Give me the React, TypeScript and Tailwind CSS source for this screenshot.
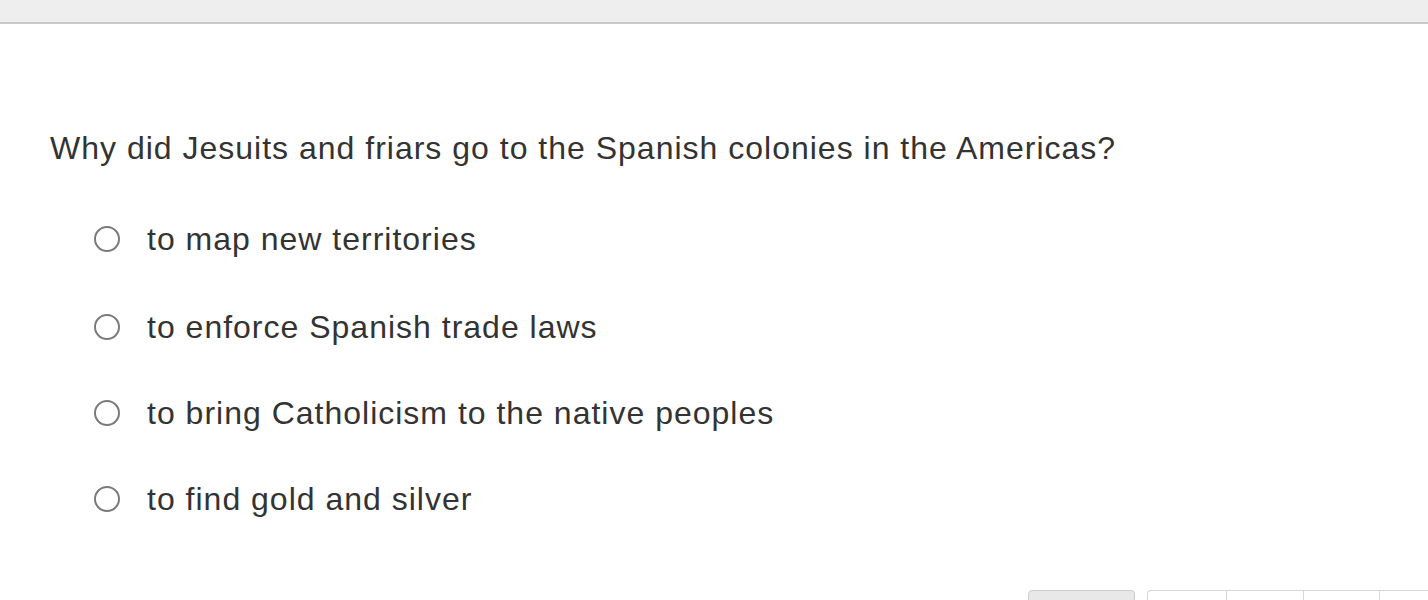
import React, { useState } from "react";

const options = [
  "to map new territories",
  "to enforce Spanish trade laws",
  "to bring Catholicism to the native peoples",
  "to find gold and silver",
];

const Radio: React.FC<{ checked: boolean }> = ({ checked }) => (
  <span className="flex h-[26px] w-[26px] shrink-0 items-center justify-center rounded-full border-2 border-[#7a7a7a] bg-white">
    {checked && <span className="h-[12px] w-[12px] rounded-full bg-[#555]" />}
  </span>
);

export default function App() {
  const [selected, setSelected] = useState<number | null>(null);

  return (
    <div
      className="h-[600px] w-full overflow-hidden bg-white text-[#333333]"
      style={{ fontFamily: '"Liberation Sans", Arial, Helvetica, sans-serif' }}
    >
      <div className="h-[24px] border-b-2 border-[#c8c8c8] bg-[#eeeeee]" />

      <div className="pl-[50px] pt-[106px]">
        <p className="text-[32px] leading-[36px] tracking-[1px]">
          Why did Jesuits and friars go to the Spanish colonies in the Americas?
        </p>
      </div>

      <ul className="mt-[28px] pl-[94px]">
        {options.map((opt, i) => (
          <li key={opt} className={i === 0 ? "h-[90px]" : "h-[86px]"}>
            <button
              type="button"
              onClick={() => setSelected(i)}
              className="flex h-full items-center gap-[27px] text-left text-[32px] leading-[36px] tracking-[1px]"
            >
              <Radio checked={selected === i} />
              <span>{opt}</span>
            </button>
          </li>
        ))}
      </ul>

      <div className="mt-[48px] flex whitespace-nowrap pl-[1028px]">
        <button
          type="button"
          className="h-[36px] w-[107px] shrink-0 rounded-[4px] border border-[#cccccc] bg-[#e8e8e8]"
        />
        <div className="ml-[12px] flex shrink-0 rounded-tl-[4px] border border-r-0 border-[#d6d6d6] bg-white">
          <span className="h-[36px] w-[79px] border-r border-[#d6d6d6]" />
          <span className="h-[36px] w-[77px] border-r border-[#d6d6d6]" />
          <span className="h-[36px] w-[76px] border-r border-[#d6d6d6]" />
          <span className="h-[36px] w-[80px]" />
        </div>
      </div>
    </div>
  );
}
